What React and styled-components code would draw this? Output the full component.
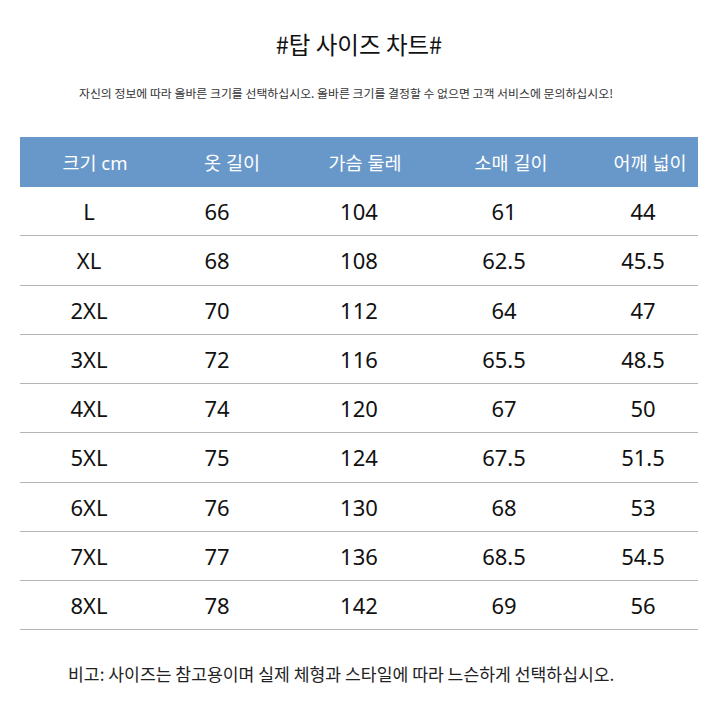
import React from "react";
import styled, { createGlobalStyle } from "styled-components";

const Global = createGlobalStyle`
  html, body { margin: 0; padding: 0; background: #ffffff; }
  body { font-family: "Noto Sans", "Noto Sans CJK KR", sans-serif; color: #111; }
`;

const Page = styled.div`
  width: 720px;
  height: 720px;
  box-sizing: border-box;
  padding: 29px 22px 0 20px;
  display: flex;
  flex-direction: column;
  overflow: hidden;
`;

const Title = styled.h1`
  margin: 0;
  font-family: "Noto Sans CJK KR", sans-serif;
  font-weight: 400;
  font-size: 23.5px;
  line-height: 30px;
  text-align: center;
  color: #111;
`;

const Subtitle = styled.p`
  margin: 26px 0 0;
  font-family: "Noto Sans CJK KR", sans-serif;
  font-size: 11.9px;
  line-height: 16px;
  text-align: center;
  color: #333;
  padding-right: 26px;
`;

const Table = styled.div`
  margin-top: 36px;
  display: flex;
  flex-direction: column;
`;

const COLS = "138px 118px 166px 124px 132px";

const HeaderRow = styled.div`
  display: grid;
  grid-template-columns: ${COLS};
  height: 50px;
  align-items: center;
  background: #6898c9;
`;

const HeaderCell = styled.div`
  text-align: center;
  color: #ffffff;
  font-family: "Noto Sans", "Noto Sans CJK KR", sans-serif;
  font-size: 18.5px;
  padding-left: ${(p) => (p.$dx > 0 ? p.$dx * 2 : 0)}px;
  padding-right: ${(p) => (p.$dx < 0 ? -p.$dx * 2 : 0)}px;
`;

const Row = styled.div`
  display: grid;
  grid-template-columns: ${COLS};
  height: 49.25px;
  box-sizing: border-box;
  align-items: center;
  border-bottom: 1.5px solid #b4b4b4;
`;

const Cell = styled.div`
  text-align: center;
  font-family: "Noto Sans", sans-serif;
  font-size: 22px;
  color: #111;
  padding-left: ${(p) => (p.$dx > 0 ? p.$dx * 2 : 0)}px;
  padding-right: ${(p) => (p.$dx < 0 ? -p.$dx * 2 : 0)}px;
`;

const Note = styled.p`
  margin: 33px 0 0;
  padding-left: 48px;
  font-family: "Noto Sans CJK KR", sans-serif;
  font-size: 17.2px;
  line-height: 22px;
  color: #222;
`;

const headers = ["크기 cm", "옷 길이", "가슴 둘레", "소매 길이", "어깨 넓이"];
const headerDx = [6, 15, 6, 7, 18];
const bodyDx = [0, 0, 0, 0, 11];

const rows = [
  ["L", "66", "104", "61", "44"],
  ["XL", "68", "108", "62.5", "45.5"],
  ["2XL", "70", "112", "64", "47"],
  ["3XL", "72", "116", "65.5", "48.5"],
  ["4XL", "74", "120", "67", "50"],
  ["5XL", "75", "124", "67.5", "51.5"],
  ["6XL", "76", "130", "68", "53"],
  ["7XL", "77", "136", "68.5", "54.5"],
  ["8XL", "78", "142", "69", "56"],
];

export default function App() {
  return (
    <>
      <Global />
      <Page>
        <Title>#탑 사이즈 차트#</Title>
        <Subtitle>
          자신의 정보에 따라 올바른 크기를 선택하십시오. 올바른 크기를 결정할 수 없으면 고객 서비스에 문의하십시오!
        </Subtitle>
        <Table>
          <HeaderRow>
            {headers.map((h, i) => (
              <HeaderCell key={h} $dx={headerDx[i]}>
                {h}
              </HeaderCell>
            ))}
          </HeaderRow>
          {rows.map((r) => (
            <Row key={r[0]}>
              {r.map((v, i) => (
                <Cell key={i} $dx={bodyDx[i]}>
                  {v}
                </Cell>
              ))}
            </Row>
          ))}
        </Table>
        <Note>비고: 사이즈는 참고용이며 실제 체형과 스타일에 따라 느슨하게 선택하십시오.</Note>
      </Page>
    </>
  );
}
